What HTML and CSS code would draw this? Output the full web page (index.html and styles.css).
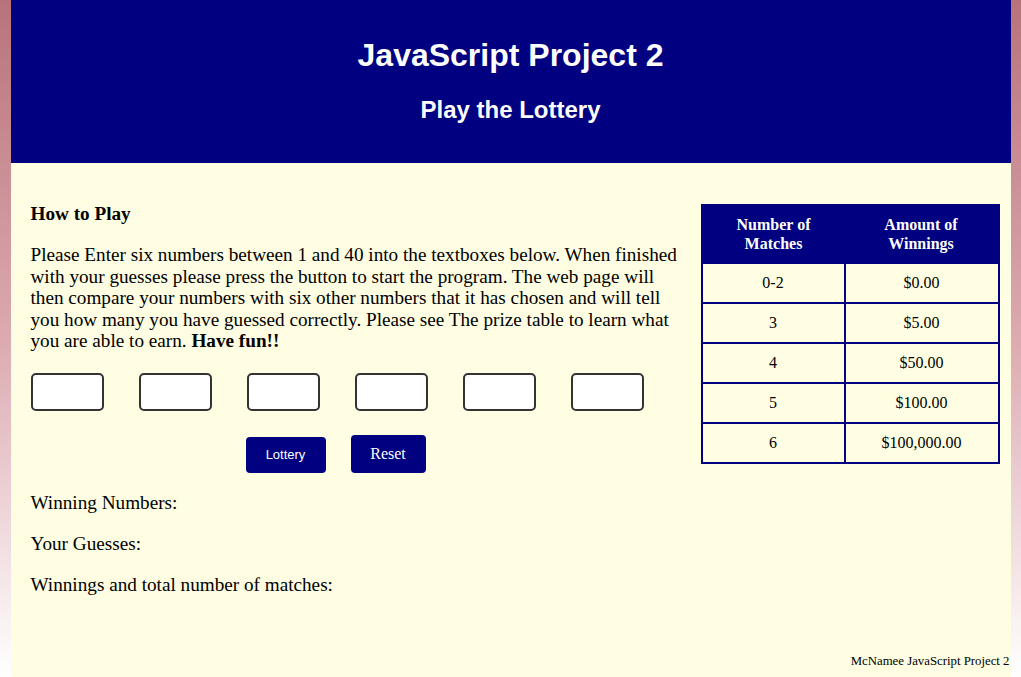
FILE: index.html
```html
<!DOCTYPE html>
<html>
<head>
<meta charset="utf-8">
<link rel="stylesheet" href="styles.css">
</head>
<body>
<div class="page">
  <header class="banner">
    <h1>JavaScript Project 2</h1>
    <h2>Play the Lottery</h2>
  </header>
  <main class="content">
    <section class="game">
      <h3 class="howto">How to Play</h3>
      <p class="intro">Please Enter six numbers between 1 and 40 into the textboxes below. When finished with your guesses please press the button to start the program. The web page will then compare your numbers with six other numbers that it has chosen and will tell you how many you have guessed correctly. Please see The prize table to learn what you are able to earn. <b>Have fun!!</b></p>
      <div class="guesses">
        <input class="guess" type="text">
        <input class="guess" type="text">
        <input class="guess" type="text">
        <input class="guess" type="text">
        <input class="guess" type="text">
        <input class="guess" type="text">
      </div>
      <div class="actions">
        <button class="btn btn-lottery" type="button">Lottery</button>
        <button class="btn btn-reset" type="button">Reset</button>
      </div>
      <p class="result">Winning Numbers:</p>
      <p class="result">Your Guesses:</p>
      <p class="result">Winnings and total number of matches:</p>
    </section>
    <table class="prizes">
      <thead>
        <tr><th class="col-matches">Number of<br>Matches</th><th>Amount of<br>Winnings</th></tr>
      </thead>
      <tbody>
        <tr><td>0-2</td><td>$0.00</td></tr>
        <tr><td>3</td><td>$5.00</td></tr>
        <tr><td>4</td><td>$50.00</td></tr>
        <tr><td>5</td><td>$100.00</td></tr>
        <tr><td>6</td><td>$100,000.00</td></tr>
      </tbody>
    </table>
  </main>
  <footer class="credit">McNamee JavaScript Project 2</footer>
</div>
</body>
</html>
```

FILE: styles.css
```css
html, body {
  margin: 0;
  padding: 0;
}
body {
  min-height: 677px;
  background: linear-gradient(to bottom, #b8737a 0%, #dcaab0 50%, #ffffff 100%);
  font-family: "Liberation Serif", "Times New Roman", serif;
  color: #000;
}
.page {
  width: 1000px;
  margin: 0 auto;
  background: #fffde2;
  min-height: 677px;
  display: flex;
  flex-direction: column;
}
.banner {
  background: #000080;
  color: #fff;
  height: 163px;
  text-align: center;
  font-family: "Liberation Sans", Arial, sans-serif;
  padding-top: 1px;
  box-sizing: border-box;
}
.banner h1 {
  font-size: 32px;
  margin: 36px 0 0;
  line-height: 37px;
}
.banner h2 {
  font-size: 24px;
  margin: 22px 0 0;
  line-height: 28px;
}
.content {
  display: flex;
  align-items: flex-start;
  padding: 40px 11px 0 20px;
  flex: 1;
}
.game {
  width: 652px;
  font-size: 19.2px;
}
.howto {
  font-size: 19.2px;
  margin: 0 0 19px;
  line-height: 22px;
}
.intro {
  margin: 0 0 21px;
  line-height: 21.6px;
}
.guesses {
  display: flex;
  gap: 35px;
}
.guess {
  width: 73px;
  height: 38px;
  box-sizing: border-box;
  border: 2px solid #333;
  border-radius: 5px;
  background: #fff;
  margin: 0;
}
.actions {
  display: flex;
  align-items: flex-end;
  gap: 25px;
  margin: 24px 0 0 215px;
  height: 38px;
}
.btn {
  background: #000080;
  color: #fff;
  border: none;
  border-radius: 4px;
  padding: 0;
}
.btn-lottery {
  width: 80px;
  height: 36px;
  font-family: "Liberation Sans", Arial, sans-serif;
  font-size: 13px;
}
.btn-reset {
  width: 75px;
  height: 38px;
  font-family: "Liberation Serif", "Times New Roman", serif;
  font-size: 16px;
}
.result {
  margin: 19px 0 19.2px;
  line-height: 21.6px;
}
.result + .result {
  margin-top: 0;
}
.prizes {
  margin-left: auto;
  margin-top: 1px;
  width: 299px;
  border-collapse: collapse;
  border: 2px solid #000080;
  font-size: 16px;
  text-align: center;
}
.prizes th {
  background: #000080;
  color: #fff;
  height: 56px;
  padding: 0;
  line-height: 19px;
}
.prizes .col-matches {
  width: 142px;
}
.prizes td {
  border: 2px solid #000080;
  height: 38px;
  padding: 0;
}
.credit {
  text-align: right;
  font-size: 12.8px;
  padding: 0 1px 8px 0;
}
```
